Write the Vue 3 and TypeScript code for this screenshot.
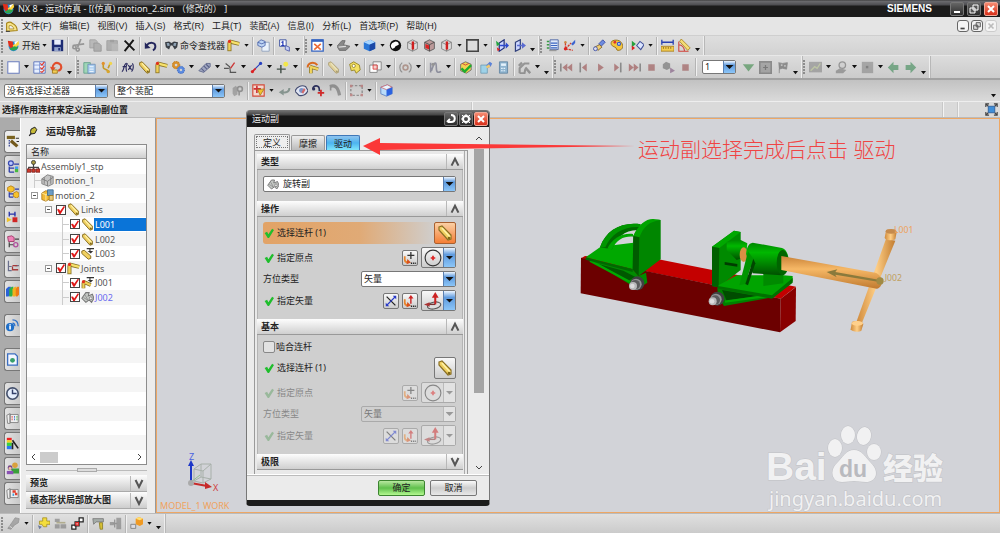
<script setup lang="ts">
import { ref } from 'vue'

type Item = { k: 'icon' | 'caret' | 'sep' | 'more' | 'text' | 'combo'; n?: string; t?: string; off?: boolean }
type Group = { items: Item[] }

const ic = (spec: string): Item[] =>
  spec.split(' ').map((s): Item => {
    if (s === 'v') return { k: 'caret' }
    if (s === '|') return { k: 'sep' }
    if (s === '_') return { k: 'more' }
    if (s === '#') return { k: 'combo' }
    if (s.startsWith('"')) return { k: 'text', t: s.slice(1) }
    if (s.startsWith('-')) return { k: 'icon', n: s.slice(1), off: true }
    return { k: 'icon', n: s }
  })

const menus = ['文件(F)', '编辑(E)', '视图(V)', '插入(S)', '格式(R)', '工具(T)', '装配(A)', '信息(I)', '分析(L)', '首选项(P)', '帮助(H)']

const bar1: Group[] = [
  { items: ic('nx "开始 v save | -cut -copy -paste delete | undo | find "命令查找器 joint v | cubedoc | infodoc _') },
  { items: ic('fit v shade v cube v contrast redbox1 redbox2 redbox1 v square v | csys1 csys2 _') },
  { items: ic('layers axes v | hand palette | playcube v | ruler protractor _') },
]
const bar2: Group[] = [
  { items: ic('page v checklist rewind _') },
  { items: ic('calc branch | fx pencil joint gears v spring v contact v linkline v point v | driver | -pencil | tag | overlap v | -rings v | -curve v | solve | export calc2 | -arm v _') },
  { items: ic('-first -prev -play -next -last -stop -camera -stop | # -down -plusbox -flag _') },
  { items: ic('-chart v -probe v -dotbox v -left -right _') },
]
const bar3: Item[] = ic('-rings2 | snap v -back eye pathred -pathgray | -marquee v | cubered')
const bottom: Item[] = ic('-wrench v | yellowplus -chips redlink | crane -tree | ycube v _')

const filter = ref('没有选择过滤器')
const scope = ref('整个装配')
const step = ref('1')
const kind = ref('旋转副')
const orient = ref('矢量')

const resTabs = [
  { n: 'nav1', on: true }, { n: 'nav2' }, { n: 'nav3' }, { n: 'nav4' }, { n: 'nav5' }, { n: 'nav6' }, { n: 'books' },
  { n: 'web', gap: true }, { n: 'html', gap: true }, { n: 'clock', gap: true }, { n: 'roll' }, { n: 'rainbow' }, { n: 'people' }, { n: 'roll2' },
]

type Row = { t: string; i: string; lv: string; exp?: boolean; chk?: boolean; line?: boolean; sel?: boolean; blue?: boolean }
const rows: Row[] = [
  { t: 'Assembly1_stp', i: 'asm', lv: 'l0' },
  { t: 'motion_1', i: 'motiongray', lv: 'l1', line: true },
  { t: 'motion_2', i: 'motion', lv: 'l1', exp: true },
  { t: 'Links', i: 'pencil', lv: 'l2', exp: true, chk: true },
  { t: 'L001', i: 'pencil', lv: 'l3', line: true, chk: true, sel: true },
  { t: 'L002', i: 'pencil', lv: 'l3', line: true, chk: true },
  { t: 'L003', i: 'pencilg', lv: 'l3', line: true, chk: true },
  { t: 'Joints', i: 'joint', lv: 'l2', exp: true, chk: true },
  { t: 'J001', i: 'jointg', lv: 'l3', line: true, chk: true },
  { t: 'J002', i: 'rev', lv: 'l3', line: true, chk: true, blue: true },
]
const blanks = 10
const tabs = ['定义', '摩擦', '驱动']
</script>

<template>
  <svg class="sprite" aria-hidden="true">
    <symbol id="nx" viewBox="0 0 16 16"><circle cx="8" cy="9" r="6" fill="#2a8ad0" /><path d="M1 2l6 1 1 6-3 3-3-4z" fill="#e0301c" /><path d="M7 8l7-6 1 4-6 7z" fill="#ffd640" /><path d="M3 12c3 3 8 3 11-2l-5-1z" fill="#2ea34a" /><path d="M9 4l5-2-4 5z" fill="#fff" /></symbol>
    <symbol id="save" viewBox="0 0 16 16"><path d="M1 1h14v14H1z" fill="#1d2c74" /><path d="M4 1h8v6H4z" fill="#e8eefc" /><path d="M4 10h8v5H4z" fill="#93a4cc" /><path d="M9 11h2v3H9z" fill="#1d2c74" /></symbol>
    <symbol id="cut" viewBox="0 0 16 16"><path d="M11 0L7 10M1 8l14-2" stroke="#555" stroke-width="2" /><circle cx="3" cy="10" r="2" fill="none" stroke="#555" stroke-width="2" /><circle cx="7" cy="13" r="2" fill="none" stroke="#555" stroke-width="2" /></symbol>
    <symbol id="copy" viewBox="0 0 16 16"><path d="M1 1h7l2 2v8H1z" fill="#999" stroke="#666" /><path d="M6 5h6l3 3v7H6z" fill="#888" stroke="#555" /></symbol>
    <symbol id="paste" viewBox="0 0 16 16"><path d="M1 2h13v12H1z" fill="#888" stroke="#666" /><path d="M5 1h5v3H5z" fill="#666" /><path d="M7 6h8v9H7z" fill="#999" /></symbol>
    <symbol id="delete" viewBox="0 0 16 16"><path d="M2 2l12 12M13 1L2 15" stroke="#161616" stroke-width="2.4" /></symbol>
    <symbol id="undo" viewBox="0 0 16 16"><path d="M3 8c4-5 11-4 11 1 0 2-1 4-3 5" fill="none" stroke="#23265c" stroke-width="2.4" /><path d="M1 4v8l7-1z" fill="#23265c" /></symbol>
    <symbol id="find" viewBox="0 0 16 16"><path d="M0 4l5-1 3 2 3-2 5 1-1 6-3 3-3-5H7l-2 5-4-3z" fill="#3b4047" /><path d="M2 5l3 0 1 3-3 1zM11 5l3 0-1 4-3-1z" fill="#8fa2b4" /></symbol>
    <symbol id="joint" viewBox="0 0 16 16"><path d="M3 3l12 3" stroke="#8a7424" stroke-width="5" /><path d="M3 3l12 3" stroke="#f7e26b" stroke-width="3" /><path d="M3 4v11" stroke="#8a7424" stroke-width="5" /><path d="M3 3v11" stroke="#efcf58" stroke-width="3" /><circle cx="3" cy="3" r="2" fill="#e0301c" /></symbol>
    <symbol id="cubedoc" viewBox="0 0 16 16"><path d="M6 4h9v11H6z" fill="#eaf2fb" stroke="#8a9bb8" /><path d="M1 4l4-3 5 2v5l-4 2-5-2z" fill="#bed5f4" stroke="#4660a8" /><path d="M1 4l5 2 4-2" fill="none" stroke="#4660a8" /></symbol>
    <symbol id="infodoc" viewBox="0 0 16 16"><path d="M2 1h8v8H2z" fill="#fff" stroke="#253d96" /><path d="M6 2v6M4 4h2M4 8h4" stroke="#2438b8" stroke-width="1.5" /><path d="M9 8l5 2v5l-5-2z" fill="#c6cff2" stroke="#4a56a8" /></symbol>
    <symbol id="fit" viewBox="0 0 16 16"><path d="M1 1h14v14H1z" fill="#fff" stroke="#3463c0" stroke-width="1.6" /><path d="M1 2h14" stroke="#3463c0" stroke-width="3" /><path d="M4 6l8 7M12 6l-8 7" stroke="#ec6a35" stroke-width="2" /></symbol>
    <symbol id="shade" viewBox="0 0 16 16"><path d="M0 9l6-7 4 0-2 5 8 2-5 5-8 0z" fill="#888" stroke="#666" /><path d="M2 10l9-1" stroke="#ddd" stroke-width="1.5" /></symbol>
    <symbol id="cube" viewBox="0 0 16 16"><path d="M1 4l8-3 6 3v8l-7 3-7-3z" fill="#2b78d8" /><path d="M1 4l8-3 6 3-7 3z" fill="#a9d6ff" /><path d="M8 7l7-3v8l-7 3z" fill="#1b48a6" /></symbol>
    <symbol id="cubered" viewBox="0 0 16 16"><path d="M1 4l8-3 6 3v8l-7 3-7-3z" fill="#b9dcfa" stroke="#5a7fc0" /><path d="M1 4l8-3 6 3-7 3z" fill="#e8f6ff" stroke="#d06a70" /><path d="M8 7l7-3v8l-7 3z" fill="#2b62e0" /></symbol>
    <symbol id="contrast" viewBox="0 0 16 16"><circle cx="8" cy="8" r="7" fill="#111" /><path d="M8 3a4 4 0 0 1 4 4L8 9a4 4 0 0 1-4 3 5 5 0 0 1 0-7z" fill="#fff" /></symbol>
    <symbol id="redbox1" viewBox="0 0 16 16"><path d="M2 4l6-3 6 3v8l-6 3-6-3z" fill="#ddd" stroke="#777" /><path d="M2 4l6 3 6-3M8 7v8" stroke="#777" fill="none" /><path d="M7 3h3v10H7z" fill="#cf2020" /></symbol>
    <symbol id="redbox2" viewBox="0 0 16 16"><path d="M2 4l6-3 6 3v8l-6 3-6-3z" fill="#b99" stroke="#555" /><path d="M3 6l5 2v5l-5-2z" fill="#d22" /><path d="M2 4l6 3 6-3M8 7v8" stroke="#444" fill="none" /></symbol>
    <symbol id="square" viewBox="0 0 16 16"><path d="M1 1h14v14H1z" fill="#dcdcdc" stroke="#444" stroke-width="2" /></symbol>
    <symbol id="csys1" viewBox="0 0 16 16"><path d="M4 5l6-4v10l-6 4z" fill="#cdd7ff" stroke="#20307c" stroke-width="1.5" /><path d="M5 7h7V4l4 4-4 4V9H5z" fill="#2c49d0" /><path d="M0 2l5 4-4 3z" fill="#24a440" /><path d="M1 10l4 3-3 2z" fill="#d22" /></symbol>
    <symbol id="csys2" viewBox="0 0 16 16"><path d="M3 4l6-3v11l-6 3z" fill="#cdd7ff" stroke="#30407c" stroke-width="1.5" /><path d="M5 7h6V4l5 4-5 4V9H5z" fill="#5a6bd0" /></symbol>
    <symbol id="layers" viewBox="0 0 16 16"><path d="M5 1h10v12H5z" fill="#dfe9f8" stroke="#3c589c" /><path d="M1 3h3M1 7h3M1 11h3" stroke="#3a9a46" stroke-width="2" /><path d="M6 5h8M6 8h8M6 11h8" stroke="#3b64c0" stroke-width="1.5" /><path d="M4 14h9" stroke="#999" stroke-width="2" /></symbol>
    <symbol id="axes" viewBox="0 0 16 16"><path d="M3 12V4M3 12l9 2M3 12l7-7" stroke="#d23a2a" stroke-width="1.6" stroke-dasharray="3 1" /><path d="M10 6l5-5v4l-3 3z" fill="#3b64d0" /><circle cx="3" cy="12" r="2" fill="#d22" /><circle cx="3" cy="4" r="1.5" fill="#c84" /></symbol>
    <symbol id="hand" viewBox="0 0 16 16"><path d="M7 6l5-5 3 3-5 5z" fill="#6d8be0" stroke="#3346a0" /><path d="M2 10l6-3 3 3-5 4z" fill="#f1cf72" stroke="#7a5a20" /><circle cx="3" cy="12" r="2.4" fill="#dde" stroke="#3346a0" /></symbol>
    <symbol id="palette" viewBox="0 0 16 16"><path d="M2 3c4-3 11-2 13 3s-1 8-5 8c-3 0-1-3-4-4S0 7 2 3z" fill="#f4c53c" stroke="#8a6414" /><circle cx="6" cy="4" r="1.7" fill="#d33" /><circle cx="11" cy="6" r="2.6" fill="#2c5bd0" /><circle cx="11" cy="6" r="1" fill="#fff" /></symbol>
    <symbol id="playcube" viewBox="0 0 16 16"><path d="M1 2l5 4-5 4z" fill="#26a13e" /><path d="M1 8l4 3-4 3z" fill="#d22" /><path d="M7 8l4-5 5 4-4 6z" fill="#dce6ff" stroke="#3f4f98" stroke-width="1.3" /></symbol>
    <symbol id="ruler" viewBox="0 0 16 16"><path d="M0 9h16v6H0z" fill="#f3cd50" stroke="#a57a18" /><path d="M1 4h14M1 1v6M15 1v6" stroke="#2840b0" stroke-width="1.6" /><path d="M3 10v2M6 10v2M9 10v2M12 10v2" stroke="#7a5a10" /></symbol>
    <symbol id="protractor" viewBox="0 0 16 16"><path d="M1 3v12h12M1 7c4 0 7 4 7 8" fill="none" stroke="#d04038" stroke-width="1.3" /><path d="M4 0l11 11-3 3L2 3z" fill="#f4db74" stroke="#a5821e" /></symbol>
    <symbol id="page" viewBox="0 0 16 16"><path d="M1 1h14v14H1z" fill="#fff" stroke="#6c7fc0" stroke-width="1.3" /></symbol>
    <symbol id="checklist" viewBox="0 0 16 16"><path d="M1 1h14v14H1z" fill="#e6efff" stroke="#4d67b4" /><path d="M8 1v14M1 5h14M1 10h14" stroke="#7c95d4" /><path d="M9 3l2 2 3-4M9 8l2 2 3-4M9 13l2 1 3-3" stroke="#e03a2a" fill="none" stroke-width="1.4" /></symbol>
    <symbol id="rewind" viewBox="0 0 16 16"><path d="M3 9c0-5 4-8 8-6s4 8-1 9" fill="none" stroke="#e14e2c" stroke-width="2.6" /><path d="M0 7l7 1-4 5z" fill="#e14e2c" /><path d="M3 11h6v4H3z" fill="#f3cc56" stroke="#9a7414" /></symbol>
    <symbol id="calc" viewBox="0 0 16 16"><path d="M1 2h8v13H1z" fill="#9fd6b6" stroke="#5f9c88" /><path d="M6 4h9v11H6z" fill="#a9cdf0" stroke="#6c8cb4" /><path d="M8 7h5M8 10h5M8 13h5" stroke="#fff" /></symbol>
    <symbol id="branch" viewBox="0 0 16 16"><path d="M4 3v5c0 3 7 2 7 6M12 4l-2 5" fill="none" stroke="#c59a28" stroke-width="2" /><circle cx="4" cy="3" r="2" fill="#e2912c" /><circle cx="13" cy="3" r="2" fill="#f1d54c" /><circle cx="10" cy="13" r="2" fill="#d8a52c" /></symbol>
    <symbol id="fx" viewBox="0 0 16 16"><path d="M1 13c3 0 2-10 6-10M2 7h5M8 3c-2 3-2 7-1 10M14 3c2 3 1 8-1 10M9 5l4 6M13 5l-4 6" fill="none" stroke="#2c2c60" stroke-width="1.4" /></symbol>
    <symbol id="pencil" viewBox="0 0 16 16"><path d="M2 2l3-1 9 9 0 4-3 1L2 5z" fill="#f0d060" stroke="#8a7024" stroke-width="1.2" /><path d="M5 3l8 9" stroke="#fff2a8" stroke-width="1.6" /><circle cx="12" cy="13" r="1.3" fill="#806818" /></symbol>
    <symbol id="gears" viewBox="0 0 16 16"><circle cx="5" cy="5" r="3.2" fill="none" stroke="#d8902c" stroke-width="3" /><circle cx="5" cy="5" r="4.6" fill="none" stroke="#b8741c" stroke-dasharray="1.5 1.5" /><circle cx="11" cy="11" r="3" fill="none" stroke="#5a8ae0" stroke-width="3" /><circle cx="11" cy="11" r="4.4" fill="none" stroke="#3a60b0" stroke-dasharray="1.5 1.5" /></symbol>
    <symbol id="spring" viewBox="0 0 16 16"><path d="M1 12l9-9 5 0 0 4-8 7z" fill="#a0a6c0" stroke="#5a6288" /><path d="M4 9l4 4M7 6l4 4M10 4l4 4" stroke="#5a6288" stroke-width="1.4" /></symbol>
    <symbol id="contact" viewBox="0 0 16 16"><path d="M7 14h8M2 3l5 4 1 7M0 9h6" stroke="#555" stroke-width="1.4" fill="none" /><path d="M8 9l5-7" stroke="#c33" stroke-width="1.6" /></symbol>
    <symbol id="linkline" viewBox="0 0 16 16"><path d="M2 14L13 3" stroke="#2740c0" stroke-width="1.5" /><circle cx="3" cy="13" r="2" fill="#d22" /><circle cx="13" cy="3" r="2" fill="#2740c0" /><path d="M4 12l3-3" stroke="#d22" stroke-width="2" /></symbol>
    <symbol id="point" viewBox="0 0 16 16"><path d="M6 5v10M1 10h11" stroke="#45524a" stroke-width="1.8" /><circle cx="12" cy="4" r="3" fill="#f2e74a" /></symbol>
    <symbol id="driver" viewBox="0 0 16 16"><path d="M2 8c0-6 8-8 12-3" fill="none" stroke="#d9691f" stroke-width="2.4" /><path d="M5 7l10 3M6 7v8" stroke="#8a7424" stroke-width="4.4" /><path d="M5 7l10 3M6 7v8" stroke="#f2d55c" stroke-width="2.6" /></symbol>
    <symbol id="tag" viewBox="0 0 16 16"><path d="M2 4l5-3 7 4 1 6-5 4-2-4-4 1z" fill="#f2df62" stroke="#8d7a1c" /><circle cx="7" cy="6" r="2" fill="#fff" stroke="#8d7a1c" /></symbol>
    <symbol id="overlap" viewBox="0 0 16 16"><path d="M5 1h10v10H5z" fill="#f4f4f4" stroke="#777" /><path d="M1 5h9v9H1z" fill="#fff" stroke="#777" /><path d="M5 5h5v5H5z" fill="#f3d0cc" stroke="#d33" /></symbol>
    <symbol id="rings" viewBox="0 0 16 16"><path d="M4 2c-4 3-4 9 0 12M12 2c4 3 4 9 0 12" fill="none" stroke="#555" stroke-width="1.5" /><circle cx="8" cy="8" r="3" fill="none" stroke="#8a5a4a" stroke-width="2" /></symbol>
    <symbol id="rings2" viewBox="0 0 16 16"><path d="M2 5l4-3 2 3v8l-4 2-2-3z" fill="#777" /><circle cx="11" cy="6" r="3" fill="none" stroke="#555" stroke-width="2" /><path d="M10 9v5" stroke="#555" stroke-width="2" /></symbol>
    <symbol id="curve" viewBox="0 0 16 16"><path d="M2 2v12M3 12c4-12 6-12 6-4s3 6 6 5" fill="none" stroke="#4c4f6a" stroke-width="2" /><circle cx="5" cy="4" r="2" fill="#555" /></symbol>
    <symbol id="solve" viewBox="0 0 16 16"><path d="M2 4l6-3 7 3v7l-6 4-7-3z" fill="#f2d250" stroke="#666" /><path d="M4 3l4 2 4-2" stroke="#c33" fill="none" /><path d="M3 9l4 4 8-8" stroke="#1fae2c" stroke-width="3" fill="none" /></symbol>
    <symbol id="export" viewBox="0 0 16 16"><path d="M1 5h8v10H1z" fill="#9ed2e8" stroke="#6f9cb4" /><path d="M8 5l4-4 3 2-2 4-4 2z" fill="#5b82d8" /><path d="M7 7l4-3 2 3-4 2z" fill="#f0c86c" /></symbol>
    <symbol id="calc2" viewBox="0 0 16 16"><path d="M3 1h10v14H3z" fill="#8fb4cf" stroke="#5f82a0" /><path d="M5 3h6v3H5z" fill="#e4f2fc" /><path d="M5 9h6M5 12h6" stroke="#e4f2fc" stroke-dasharray="2 1" stroke-width="1.5" /></symbol>
    <symbol id="arm" viewBox="0 0 16 16"><path d="M2 15V9l6-6 6 0M2 15h6l1-5" fill="none" stroke="#555" stroke-width="2.6" /><path d="M9 8l6 7M1 6l4-4" stroke="#555" stroke-width="3" /></symbol>
    <symbol id="first" viewBox="0 0 16 16"><path d="M1 3v10" stroke="#444" stroke-width="2" /><path d="M9 3v10L3 8zM15 3v10L9 8z" fill="#8c2f2f" /></symbol>
    <symbol id="prev" viewBox="0 0 16 16"><path d="M4 2v12" stroke="#444" stroke-width="2" /><path d="M12 3v10L6 8z" fill="#8c2f2f" /></symbol>
    <symbol id="play" viewBox="0 0 16 16"><path d="M5 3v10l7-5z" fill="#8c2f2f" /></symbol>
    <symbol id="next" viewBox="0 0 16 16"><path d="M12 2v12" stroke="#444" stroke-width="2" /><path d="M4 3v10l6-5z" fill="#8c2f2f" /></symbol>
    <symbol id="last" viewBox="0 0 16 16"><path d="M15 3v10" stroke="#444" stroke-width="2" /><path d="M1 3v10l6-5zM7 3v10l6-5z" fill="#8c2f2f" /></symbol>
    <symbol id="stop" viewBox="0 0 16 16"><path d="M4 4h8v8H4z" fill="#8c3636" /></symbol>
    <symbol id="camera" viewBox="0 0 16 16"><path d="M1 4l4-3 5 2v6l-4 2-5-2z" fill="#555" /><path d="M10 8v7l6-3z" fill="#6b3a6b" /></symbol>
    <symbol id="down" viewBox="0 0 16 16"><path d="M1 4h14L8 13z" fill="#1e7a2c" /></symbol>
    <symbol id="plusbox" viewBox="0 0 16 16"><path d="M1 1h14v14H1z" fill="#777" stroke="#444" stroke-width="2" /><path d="M8 5v6M5 8h6" stroke="#222" stroke-width="1.5" /></symbol>
    <symbol id="flag" viewBox="0 0 16 16"><path d="M3 2l5 1 6-1-1 8-5-1-4 1v5" fill="#444" stroke="#444" /><path d="M6 4h2v2H6zM10 5h2v2h-2z" fill="#aaa" /></symbol>
    <symbol id="chart" viewBox="0 0 16 16"><path d="M0 1h16v13H0z" fill="#777" /><path d="M2 12l5-5 3 2 4-6" stroke="#a8b878" stroke-width="1.6" fill="none" /></symbol>
    <symbol id="probe" viewBox="0 0 16 16"><circle cx="9" cy="5" r="4" fill="#ccc" stroke="#555" stroke-width="1.6" /><path d="M6 9l-5 3v3h9l4-4z" fill="#666" /></symbol>
    <symbol id="dotbox" viewBox="0 0 16 16"><path d="M1 1h14v14H1z" fill="#777" /><path d="M6 6h3v3H6z" fill="#333" /></symbol>
    <symbol id="left" viewBox="0 0 16 16"><path d="M8 1v4h6v6H8v4L1 8z" fill="#1d7a3c" /></symbol>
    <symbol id="right" viewBox="0 0 16 16"><path d="M8 1v4H2v6h6v4l7-7z" fill="#1d7a3c" /></symbol>
    <symbol id="snap" viewBox="0 0 16 16"><path d="M1 1h14v14H1z" fill="#f3d8d0" stroke="#d44b3a" stroke-width="1.4" /><path d="M6 2v9M2 6h9" stroke="#c33" stroke-width="2" /><path d="M7 7l8-1-5 8z" fill="#f3c12c" stroke="#a57a20" /></symbol>
    <symbol id="back" viewBox="0 0 16 16"><path d="M14 5c0 5-4 6-9 5" fill="none" stroke="#3e5a50" stroke-width="2.4" /><path d="M7 6v8l-6-4z" fill="#3e5a50" /></symbol>
    <symbol id="eye" viewBox="0 0 16 16"><path d="M0 9c2-6 8-8 13-6l3 5c-2 5-6 7-11 6z" fill="#dfe4f2" stroke="#444c70" stroke-width="1.4" /><circle cx="8" cy="8" r="3" fill="#7c94c8" /><path d="M8 10l3-5 2 2-3 5z" fill="#d06a6a" /></symbol>
    <symbol id="pathred" viewBox="0 0 16 16"><path d="M1 6c1-5 8-5 8 1v2" fill="none" stroke="#2d315c" stroke-width="2" /><path d="M11 7v8M7 11h8" stroke="#d02a2a" stroke-width="2.2" /><circle cx="2" cy="6" r="2" fill="#2d315c" /></symbol>
    <symbol id="pathgray" viewBox="0 0 16 16"><path d="M1 3c6-2 10 0 12 11" fill="none" stroke="#555" stroke-width="4" /><path d="M2 3v5" stroke="#555" stroke-width="2" /></symbol>
    <symbol id="marquee" viewBox="0 0 16 16"><path d="M1 2h14v12H1z" fill="none" stroke="#555" stroke-width="1.8" stroke-dasharray="3 2" /><path d="M0 1h3v3H0zM13 1h3v3h-3zM0 12h3v3H0zM13 12h3v3h-3z" fill="#a44" /></symbol>
    <symbol id="wrench" viewBox="0 0 16 16"><path d="M1 14l5-7 4-6 5 1-1 5-5 3-4 5z" fill="#777" stroke="#555" /><path d="M3 11l4 3" stroke="#eee" /></symbol>
    <symbol id="yellowplus" viewBox="0 0 16 16"><path d="M7 1h5v4h4v4h-4v3H8L6 9H3V5h4z" fill="#f4de3c" stroke="#a58f24" /><path d="M1 10l5 2-3 3z" fill="#6b7a9c" /></symbol>
    <symbol id="chips" viewBox="0 0 16 16"><path d="M1 2h6v4H1zM1 9h6v5H1zM8 9h7v5H8z" fill="#666" /><path d="M3 7h11" stroke="#8d8448" stroke-width="2" /></symbol>
    <symbol id="redlink" viewBox="0 0 16 16"><path d="M10 1h5v5h-5zM5 6h5v5H5zM1 10h5v5H1z" fill="#fff" stroke="#222" stroke-width="1.5" /><path d="M6 7h3v3H6z" fill="#fff" stroke="#d22" stroke-width="1.6" /></symbol>
    <symbol id="crane" viewBox="0 0 16 16"><path d="M1 2h13v4H5L2 9z" fill="#a4aca8" stroke="#777" /><path d="M9 7h4v8h-3z" fill="#d6c034" stroke="#8a7c24" /></symbol>
    <symbol id="tree" viewBox="0 0 16 16"><path d="M9 1h6v14H9zM1 6h5v4H1z" fill="#666" /><path d="M5 8h5M7 3v10" stroke="#555" stroke-width="1.6" /></symbol>
    <symbol id="ycube" viewBox="0 0 16 16"><path d="M7 2l4-2 5 2v7l-4 2-5-2z" fill="#f09a24" /><path d="M7 2l4-2 5 2-4 2z" fill="#ffdf72" /><path d="M1 9h6v5H1z" fill="#dcdce4" stroke="#777" /></symbol>

    <symbol id="nav1" viewBox="0 0 16 16"><path d="M1 3h10" stroke="#7a6320" stroke-width="4" /><path d="M4 6v9" stroke="#2a3a8c" stroke-width="1.4" stroke-dasharray="2 1" /><path d="M6 7l8 7" stroke="#73591c" stroke-width="4" /><path d="M12 4h4M13 8h3" stroke="#333" stroke-width="1.4" /></symbol>
    <symbol id="nav2" viewBox="0 0 16 16"><circle cx="6" cy="4" r="3" fill="#b9c8ff" stroke="#3849b0" stroke-width="1.5" /><path d="M4 8v7M4 10h6M4 15h6M10 5h6" stroke="#2c3da8" stroke-width="1.6" fill="none" /><path d="M11 8h4v3h-4z" fill="#3b9cf0" /><path d="M11 11h4v4h-4z" fill="#46b93e" /></symbol>
    <symbol id="nav3" viewBox="0 0 16 16"><path d="M2 3l4-2 4 2v4L6 9 2 7zM9 10l4-2 3 2v4l-3 2-4-2z" fill="#f6c22c" stroke="#b47a10" /><path d="M4 9v6M4 11h5M4 15h5M11 5h5" stroke="#2c3da8" stroke-width="1.5" /></symbol>
    <symbol id="nav4" viewBox="0 0 16 16"><path d="M4 2v6M11 2v6M4 5h8" stroke="#2430a8" stroke-width="1.6" /><path d="M1 9l6 3-6 3z" fill="#f1c326" /><path d="M8 9h6v6H8z" fill="#d02424" /></symbol>
    <symbol id="nav5" viewBox="0 0 16 16"><path d="M2 2l5-1 3 2v5H3z" fill="#ef82b8" stroke="#96305e" /><path d="M4 9v6M4 12h6M11 5h5" stroke="#444" stroke-width="1.5" /><circle cx="12" cy="12" r="2.6" fill="none" stroke="#b0509c" stroke-width="1.6" /></symbol>
    <symbol id="nav6" viewBox="0 0 16 16"><path d="M3 1v12h4M3 8h4M11 7h5" stroke="#6a6f8c" stroke-width="1.5" fill="none" /><path d="M8 7h6M8 12h7M8 8v5" stroke="#a53a3a" stroke-width="1.6" /></symbol>
    <symbol id="books" viewBox="0 0 16 16"><path d="M0 5l3-3h3v10l-3 2H0z" fill="#2a63d8" /><path d="M4 5l3-3h2v10l-2 2H4z" fill="#2fb047" /><path d="M8 5l3-3h2v10l-2 2H8z" fill="#f3b01e" /><path d="M12 5l2-3h2v10l-2 2h-2z" fill="#ef7a16" /></symbol>
    <symbol id="web" viewBox="0 0 16 16"><circle cx="5" cy="10" r="5" fill="#1f6fc8" /><path d="M5 8v5M5 6v1" stroke="#fff" stroke-width="2" /><path d="M8 5c2 0 3 2 3 4M8 1c5 0 7 4 7 8" fill="none" stroke="#2c6fc8" stroke-width="1.5" /></symbol>
    <symbol id="html" viewBox="0 0 16 16"><path d="M2 1h9l3 3v11H2z" fill="#f2f6ff" stroke="#3b6ec0" stroke-width="1.6" /><circle cx="8" cy="9" r="3" fill="#38a06a" /></symbol>
    <symbol id="clock" viewBox="0 0 16 16"><circle cx="8" cy="8" r="7" fill="#e6eefc" stroke="#44506c" stroke-width="2" /><path d="M8 3v5h5" fill="none" stroke="#33406a" stroke-width="1.8" /></symbol>
    <symbol id="roll" viewBox="0 0 16 16"><path d="M1 4l4-2v12H2zM5 3h10v10H5z" fill="#eee" stroke="#777" /><path d="M7 6h1M7 9h1" stroke="#d33" stroke-width="2" /><path d="M10 6h1M10 9h1" stroke="#36c" stroke-width="2" /><path d="M13 6h1M13 9h1" stroke="#3a3" stroke-width="2" /></symbol>
    <symbol id="roll2" viewBox="0 0 16 16"><path d="M1 4l4-2v12H2zM5 3h10v10H5z" fill="#eee" stroke="#777" /><path d="M8 4h4v3H8zM11 7h3v3h-3z" fill="#e04030" /><path d="M8 8h2v3H8z" fill="#46a0d8" /></symbol>
    <symbol id="rainbow" viewBox="0 0 16 16"><path d="M1 1h6v3H1z" fill="#e22" /><path d="M1 4h6v3H1z" fill="#f7d21c" /><path d="M1 7h6v4H1z" fill="#39d23c" /><path d="M1 11h6v4H1z" fill="#2a7af0" /><path d="M8 4l7 10M8 7v8" stroke="#222" stroke-width="2" /></symbol>
    <symbol id="people" viewBox="0 0 16 16"><circle cx="11" cy="4" r="3.4" fill="#d9a03c" /><path d="M6 8h10v6H8z" fill="#3aa03a" /><circle cx="5" cy="7" r="3" fill="#7a4a8c" /><circle cx="5" cy="8" r="1.8" fill="#f1c8a0" /><path d="M1 11h8v4H1z" fill="#8a50b4" /></symbol>

    <symbol id="asm" viewBox="0 0 16 16"><path d="M8 4v5M2 13V9h12v4M8 9v4" stroke="#444" fill="none" stroke-width="1.4" /><circle cx="8" cy="3" r="2.5" fill="#a89a44" stroke="#333" /><path d="M0 11h5v4H0zM6 11h4v4H6zM11 11h5v4h-5z" fill="#d33a2a" stroke="#722" /></symbol>
    <symbol id="motiongray" viewBox="0 0 16 16"><path d="M1 6l7-5 7 2v9l-6 3-8-3z" fill="#c4c4c4" stroke="#777" /><path d="M1 6l7 3 7-5M8 9v6M4 4v8M12 3v9" stroke="#777" fill="none" /></symbol>
    <symbol id="motion" viewBox="0 0 16 16"><path d="M1 5l5-3 5 2v8l-5 3-5-2z" fill="#f3ba36" stroke="#a9761a" /><path d="M1 5l5 2 5-3M6 7v8" stroke="#fff0b0" fill="none" /><path d="M8 1h7v7H8z" fill="#6c9cc4" stroke="#3b688c" /><path d="M10 8h5v6h-5z" fill="#e9c878" stroke="#9a7418" /></symbol>
    <symbol id="pencilg" viewBox="0 0 16 16"><path d="M1 5l3-1 8 7 0 3-3 1L1 8z" fill="#f0d060" stroke="#8a7024" stroke-width="1.2" /><path d="M7 2h9M11 2v3" stroke="#333" stroke-width="1.4" /><path d="M8 5h7l-3 3z" fill="#333" /></symbol>
    <symbol id="jointg" viewBox="0 0 16 16"><path d="M3 7l9 4M3 8v7" stroke="#8a7424" stroke-width="4.6" /><path d="M3 7l9 4M3 8v7" stroke="#efcf58" stroke-width="2.6" /><circle cx="3" cy="7" r="2" fill="#e0301c" /><path d="M7 2h9M11 2v3" stroke="#333" stroke-width="1.4" /><path d="M8 5h7l-3 3z" fill="#333" /></symbol>
    <symbol id="rev" viewBox="0 0 16 16"><path d="M1 9l5-7 4 0-1 4 5-2 2 5-3 5-3-3-4 3z" fill="#c4c8c4" stroke="#777" stroke-width="1.3" /><path d="M5 5l4 7M3 8l5 3" stroke="#888" /><circle cx="12" cy="9" r="1.8" fill="#eee" stroke="#777" /></symbol>
    <symbol id="pin" viewBox="0 0 16 16"><path d="M5 4l6-3 3 4-3 6-6 1-1-4z" fill="#c7ba38" stroke="#222" stroke-width="1.6" /><path d="M5 11l-3 4" stroke="#222" stroke-width="2" /></symbol>
    <symbol id="corner" viewBox="0 0 16 16"><path d="M2 14V4c3-2 5-2 7 0 4 2 6 6 6 9z" fill="#f7e487" stroke="#a8861c" stroke-width="1.4" /><path d="M5 11V7c3-1 5 1 6 4z" fill="#eee" stroke="#a8861c" /><path d="M1 14h5" stroke="#444" stroke-width="1.4" /></symbol>
    <symbol id="full" viewBox="0 0 16 16"><path d="M4 4h8v8H4z" fill="#3f8ed8" stroke="#275a98" /><path d="M1 5V1h4M11 1h4v4M15 11v4h-4M5 15H1v-4M1 1l3 3M15 1l-3 3M1 15l3-3M15 15l-3-3" fill="none" stroke="#444" stroke-width="1.4" /></symbol>
    <symbol id="tick" viewBox="0 0 16 16"><path d="M1 8l4-2 2 4 6-9 3 2-8 13H6z" fill="#1fbe2c" /></symbol>
    <symbol id="ptctor" viewBox="0 0 16 16"><path d="M9 1v8M5 5h8" stroke="#333" stroke-width="1.5" /><path d="M2 6v4c0 3 2 3 4 3" fill="none" stroke="#e8842c" stroke-width="2" /><path d="M5 9l4 4-5 2z" fill="#d8501c" /><path d="M9 14h6" stroke="#222" stroke-width="1.6" stroke-dasharray="1.5 1" /></symbol>
    <symbol id="vecctor" viewBox="0 0 16 16"><path d="M9 4v7" stroke="#c22" stroke-width="1.6" /><path d="M6 5l3-4 3 4z" fill="#c22" /><path d="M2 6v4c0 3 2 3 4 3" fill="none" stroke="#e8842c" stroke-width="2" /><path d="M5 9l4 4-5 2z" fill="#d8501c" /><path d="M9 14h6" stroke="#222" stroke-width="1.6" stroke-dasharray="1.5 1" /></symbol>
    <symbol id="flip" viewBox="0 0 16 16"><path d="M3 3l10 10" stroke="#222" stroke-width="1.4" /><path d="M3 13L13 3" stroke="#2839c8" stroke-width="1.6" /><path d="M10 2h4v4zM2 10v4h4z" fill="#2839c8" /></symbol>
    <symbol id="center" viewBox="0 0 16 16"><circle cx="8" cy="8" r="7" fill="none" stroke="#333" stroke-width="1" /><path d="M8 6v4M6 8h4" stroke="#d22" stroke-width="1.5" /></symbol>
    <symbol id="vector" viewBox="0 0 16 16"><ellipse cx="9" cy="12" rx="6" ry="3" fill="#ddd" stroke="#555" transform="rotate(-12 9 12)" /><path d="M10 11V4" stroke="#c22" stroke-width="1.8" /><path d="M7 5l3-5 3 5z" fill="#c22" /><path d="M10 11H4" stroke="#733" stroke-width="1.2" /><path d="M5 9l-5 2 5 2z" fill="#a33" /></symbol>
    <symbol id="chevup" viewBox="0 0 16 16"><path d="M3 14L8 4l5 10" fill="none" stroke="#555" stroke-width="3" /></symbol>
    <symbol id="chevdn" viewBox="0 0 16 16"><path d="M3 3l5 10 5-10" fill="none" stroke="#555" stroke-width="3" /></symbol>
  </svg>

  <div class="app">
    <header class="title">
      <svg class="ic"><use href="#nx" /></svg>
      <span class="cap">NX 8 - 运动仿真 - [(仿真) motion_2.sim （修改的） ]</span>
      <b class="brand">SIEMENS</b>
      <div class="wins">
        <button class="win" aria-label="最小化"><svg viewBox="0 0 12 12"><path d="M3 9h6" stroke="#fff" stroke-width="2" /></svg></button>
        <button class="win" aria-label="还原"><svg viewBox="0 0 12 12"><path d="M5 2h5v5H5zM2 5h5v5H2z" fill="#555" stroke="#fff" /></svg></button>
        <button class="win red" aria-label="关闭"><svg viewBox="0 0 12 12"><path d="M3 3l6 6M9 3l-6 6" stroke="#fff" stroke-width="2" /></svg></button>
      </div>
    </header>

    <nav class="menu">
      <i class="grip"></i>
      <svg class="ic"><use href="#corner" /></svg>
      <button v-for="m in menus" :key="m" class="mi">{{ m.split('(')[0] }}<span>({{ m.split('(')[1] }}</span></button>
      <div class="wins doc">
        <button class="dw" aria-label="最小化文档"><svg viewBox="0 0 12 12"><path d="M3 9h5" stroke="#444" stroke-width="2" /></svg></button>
        <button class="dw" aria-label="还原文档"><svg viewBox="0 0 12 12"><path d="M5 2h5v5H5zM2 5h5v5H2z" fill="#ddd" stroke="#444" /></svg></button>
        <button class="dw dim" aria-label="关闭文档"><svg viewBox="0 0 12 12"><path d="M3 3l6 6M9 3l-6 6" stroke="#bbb" stroke-width="2" /></svg></button>
      </div>
    </nav>

    <div v-for="(bar, b) in [bar1, bar2]" :key="b" class="bar" :class="'bar' + (b + 1)">
      <div v-for="(g, gi) in bar" :key="gi" class="group">
        <i class="grip"></i>
        <template v-for="(it, i) in g.items" :key="i">
          <button v-if="it.k === 'icon'" class="tb" :class="{ off: it.off }" :aria-label="it.n"><svg class="ic"><use :href="'#' + it.n" /></svg></button>
          <i v-else-if="it.k === 'caret'" class="caret"></i>
          <i v-else-if="it.k === 'sep'" class="sep"></i>
          <i v-else-if="it.k === 'more'" class="caret more"></i>
          <span v-else-if="it.k === 'text'" class="tx">{{ it.t }}</span>
          <label v-else class="combo num"><select v-model="step" aria-label="步"><option>1</option></select><i class="drop"></i></label>
        </template>
      </div>
    </div>

    <div class="bar bar3">
      <label class="combo wide1"><select v-model="filter" aria-label="过滤器"><option>没有选择过滤器</option></select><i class="drop"></i></label>
      <label class="combo wide2"><select v-model="scope" aria-label="范围"><option>整个装配</option></select><i class="drop"></i></label>
      <template v-for="(it, i) in bar3" :key="i">
        <button v-if="it.k === 'icon'" class="tb" :class="{ off: it.off }" :aria-label="it.n"><svg class="ic"><use :href="'#' + it.n" /></svg></button>
        <i v-else :class="it.k"></i>
      </template>
      <i class="caret more far"></i>
    </div>

    <div class="prompt">
      <b>选择作用连杆来定义运动副位置</b>
      <i class="psep first"></i><i class="psep"></i><i class="psep last"></i>
      <button class="tb" aria-label="全屏"><svg class="ic"><use href="#full" /></svg></button>
    </div>

    <main class="main">
      <aside class="res">
        <button v-for="t in resTabs" :key="t.n" class="rt" :class="{ on: t.on, gap: t.gap }" :aria-label="t.n"><svg class="ic"><use :href="'#' + t.n" /></svg></button>
      </aside>

      <section class="side">
        <h2><svg class="ic pin"><use href="#pin" /></svg>运动导航器</h2>
        <div class="treebox">
          <div class="thead">名称</div>
          <ul class="tree">
            <li v-for="r in rows" :key="r.t" :class="r.lv">
              <i v-if="r.exp || r.line" class="slot" :class="{ line: r.line }"><button v-if="r.exp" class="exp" aria-label="折叠"></button></i>
              <input v-if="r.chk" type="checkbox" checked :aria-label="r.t" />
              <svg class="ic"><use :href="'#' + r.i" /></svg>
              <span :class="{ sel: r.sel, blue: r.blue }">{{ r.t }}</span>
            </li>
            <li v-for="n in blanks" :key="n"></li>
          </ul>
          <div class="hs"><svg viewBox="0 0 8 8"><path d="M5 1L2 4l3 3" /></svg><i></i><svg viewBox="0 0 8 8"><path d="M3 1l3 3-3 3" /></svg></div>
        </div>
        <div class="split"><i></i></div>
        <button class="acc">预览<svg class="ic chev"><use href="#chevdn" /></svg></button>
        <button class="acc">模态形状局部放大图<svg class="ic chev"><use href="#chevdn" /></svg></button>
      </section>

      <section class="view">
        <svg class="vise" viewBox="0 0 1080 420" aria-label="台虎钳模型">
          <defs>
            <linearGradient id="rod" x1="0" y1="0" x2="0" y2="1"><stop offset="0" stop-color="#c98238" /><stop offset=".4" stop-color="#f6b866" /><stop offset="1" stop-color="#c07a30" /></linearGradient>
            <linearGradient id="bar" x1="0" y1="0" x2="1" y2="0"><stop offset="0" stop-color="#d08a3c" /><stop offset=".5" stop-color="#ffcf86" /><stop offset="1" stop-color="#c27c30" /></linearGradient>
            <linearGradient id="cyl" x1="0" y1="0" x2="0" y2="1"><stop offset="0" stop-color="#008800" /><stop offset=".3" stop-color="#00b800" /><stop offset=".6" stop-color="#008c00" /><stop offset="1" stop-color="#004e00" /></linearGradient>
          </defs>
          <path d="M33 145L45 138 265 148 678 230 632 266z" fill="#c40000" />
          <path d="M33 143L632 266 630 367 32 250z" fill="#6c0000" />
          <path d="M632 266L678 231 677 333 630 367z" fill="#890000" />
          <path d="M47 143L188 178 205 198 228 188 232 218 208 234 178 222z" fill="#008c00" />
          <path d="M86 162L176 212 195 200 160 182z" fill="#005800" />
          <path d="M60 152L180 216" stroke="#00a800" stroke-width="7" />
          <path d="M47 142L92 110 190 98 190 178z" fill="#00a800" />
          <path d="M47 142L188 178v8L47 149z" fill="#006800" />
          <path d="M90 112C108 60 155 35 212 43L204 60C160 60 140 86 126 118z" fill="#006a00" />
          <path d="M90 112C108 60 155 35 212 43L208 51C160 48 122 72 106 112z" fill="#009600" />
          <path d="M126 118C140 88 162 78 190 80L189 72C156 68 126 86 112 116z" fill="#00a600" />
          <path d="M190 78C206 44 228 26 272 30L272 148 206 198 188 178z" fill="#008600" />
          <path d="M190 78C206 44 228 26 250 27L272 30C236 36 222 48 208 82z" fill="#00a400" />
          <path d="M190 78L208 82 206 198 188 178z" fill="#005c00" />
          <circle cx="202" cy="220" r="21" fill="#3f4042" /><circle cx="198" cy="223" r="17" fill="#8f9092" /><circle cx="196" cy="224" r="14" fill="#5a5b5d" /><circle cx="189" cy="228" r="12" fill="#b8b9bb" /><circle cx="187" cy="228" r="7" fill="#dcdcde" />
          <path d="M442 232L606 262 576 268 462 288 444 260z" fill="#008000" />
          <path d="M456 240L560 258 470 272z" fill="#004c00" /><path d="M465 275L590 258" stroke="#00a800" stroke-width="7" />
          <path d="M426 110L492 62 512 66 512 180 446 232 426 228z" fill="#008a00" />
          <path d="M426 110L492 62 512 66 448 114z" fill="#00a800" /><path d="M426 110L448 114 446 232 426 228z" fill="#006000" />
          <path d="M470 95L512 90 532 100 528 140 500 150 470 120z" fill="url(#cyl)" /><path d="M464 156l38 6v8l-38-6z" fill="#003c00" />
          <path d="M446 226L500 196 640 196 668 198 668 214 606 264 444 234z" fill="#00a400" />
          <path d="M668 204v14L606 266 444 236v-8L606 256z" fill="#007000" />
          <ellipse cx="521" cy="134" rx="12" ry="22" fill="#d98f44" />
          <path d="M580 190L640 164v56l-60 8z" fill="#008a00" />
          <path d="M528 132C530 112 536 100 548 98L636 114C664 122 662 190 634 196L548 190z" fill="url(#cyl)" />
          <ellipse cx="638" cy="158" rx="18" ry="38" fill="#006400" />
          <path d="M534 124L550 146 526 222 508 226z" fill="#009400" /><path d="M550 146L526 222 534 226 556 160z" fill="#004600" />
          <circle cx="442" cy="266" r="21" fill="#404143" /><circle cx="438" cy="268" r="17" fill="#929395" /><circle cx="436" cy="270" r="14" fill="#5a5b5d" /><circle cx="428" cy="274" r="12" fill="#b8b9bb" /><circle cx="426" cy="274" r="7" fill="#dcdcde" />
          <path d="M948 86L976 92 876 338 860 334z" fill="url(#bar)" />
          <path d="M634 138L916 188C940 196 942 232 920 236L634 180z" fill="url(#rod)" />
          <path d="M770 186L802 178 796 186 930 210 928 216 796 194 800 202z" fill="#8a7a3c" />
          <circle cx="930" cy="213" r="11" fill="#a08a44" />
          <path d="M948 62C956 54 978 58 980 66L976 88C966 94 946 90 944 84z" fill="url(#bar)" />
          <ellipse cx="963" cy="64" rx="16" ry="7" fill="#c58a4c" />
          <path d="M846 336C856 330 878 334 880 342L874 362C864 368 844 364 842 358z" fill="url(#bar)" />
          <ellipse cx="862" cy="340" rx="17" ry="7" fill="#ffd08c" />
          <text x="972" y="68" class="lab">L001</text><text x="944" y="214" class="lab dk">J002</text>
        </svg>
        <svg class="triad" viewBox="0 0 48 48" aria-hidden="true">
          <g fill="none" stroke="#a8b0aa"><path d="M14 16l7-5h10v15l-8 4-9-2zM14 16l9 2 8-7M23 18v12M21 11v13l10 2M14 28l7-4" /></g>
          <path d="M11 29l9-7" stroke="#8fbe90" /><path d="M11 30V11" stroke="#1d37c8" stroke-width="2" /><path d="M8 13l3-6 3 6z" fill="#1d37c8" />
          <path d="M11 30l16 3" stroke="#c62a2a" stroke-width="2" /><path d="M25 29l7 5-7 2z" fill="#c62a2a" /><circle cx="11" cy="30" r="3" fill="#aaa" />
          <text x="9" y="7" class="z">Z</text><text x="33" y="38" class="x">X</text>
        </svg>
        <span class="model">MODEL_1 WORK</span>
        <p class="note">运动副选择完成后点击 驱动</p>
        <svg class="mark" viewBox="0 0 190 100" aria-label="百度经验">
          <g class="wm">
            <text x="2" y="68" class="bai">Bai</text>
            <ellipse cx="71" cy="36" rx="7" ry="9" /><ellipse cx="84" cy="23" rx="7" ry="9" /><ellipse cx="100" cy="24" rx="7" ry="9" transform="rotate(12 100 24)" /><ellipse cx="110" cy="40" rx="7" ry="8" />
            <path d="M90 38c8 0 11 7 17 13 9 9 5 19-5 19-5 0-8-1-12-1s-7 1-12 1c-10 0-13-11-5-19 6-6 9-13 17-13z" />
            <text x="119" y="67" class="cn">经验</text>
            <text x="5" y="94" class="url">jingyan.baidu.com</text>
          </g>
          <text x="75" y="65" class="du">du</text>
        </svg>
      </section>

      <section class="dlg" role="dialog" aria-label="运动副">
        <header><span>运动副</span>
          <button class="win" aria-label="重置"><svg viewBox="0 0 12 12"><path d="M6 2c5 0 5 7 0 7H3M5 6L2 9" fill="none" stroke="#fff" stroke-width="2" /></svg></button>
          <button class="win" aria-label="选项"><svg viewBox="0 0 12 12"><circle cx="6" cy="6" r="3" fill="none" stroke="#fff" stroke-width="2" /><path d="M6 1v2M6 9v2M1 6h2M9 6h2M2 2l2 2M8 8l2 2M10 2L8 4M4 8l-2 2" stroke="#fff" /></svg></button>
          <button class="win red" aria-label="关闭"><svg viewBox="0 0 12 12"><path d="M3 3l6 6M9 3l-6 6" stroke="#fff" stroke-width="2" /></svg></button>
        </header>
        <div class="dbody">
          <div class="pagecol">
            <div class="tabs"><button v-for="(t, i) in tabs" :key="t" :class="'tab' + i">{{ t }}</button></div>
            <div class="pg">
              <h3>类型<svg class="ic chev"><use href="#chevup" /></svg></h3>
              <div class="sec">
                <label class="combo kind"><svg class="ic"><use href="#rev" /></svg><select v-model="kind" aria-label="类型"><option>旋转副</option></select><i class="drop"></i></label>
              </div>
              <template v-for="s in 2" :key="s">
                <h3>{{ s === 1 ? '操作' : '基本' }}<svg class="ic chev"><use href="#chevup" /></svg></h3>
                <div class="sec">
                  <label v-if="s === 2" class="snapchk"><input type="checkbox" />啮合连杆</label>
                  <div class="r pick" :class="{ hot: s === 1 }"><svg class="ic"><use href="#tick" /></svg><span>选择连杆 (1)</span><button class="big" aria-label="选择连杆"><svg><use href="#pencil" /></svg></button></div>
                  <div class="r" :class="{ dis: s === 2 }"><svg class="ic"><use href="#tick" /></svg><span>指定原点</span>
                    <button class="sm" aria-label="点构造器"><svg><use href="#ptctor" /></svg></button>
                    <button class="sp" aria-label="圆心"><svg><use href="#center" /></svg><i class="drop"></i></button></div>
                  <div class="r low" :class="{ dis: s === 2 }"><label :for="'o' + s">方位类型</label>
                    <div class="combo ori"><select :id="'o' + s" v-model="orient" :disabled="s === 2"><option>矢量</option></select><i class="drop"></i></div></div>
                  <div class="r" :class="{ dis: s === 2 }"><svg class="ic"><use href="#tick" /></svg><span>指定矢量</span>
                    <button class="sm" aria-label="反向"><svg><use href="#flip" /></svg></button>
                    <button class="sm" aria-label="矢量构造器"><svg><use href="#vecctor" /></svg></button>
                    <button class="sp" aria-label="矢量"><svg><use href="#vector" /></svg><i class="drop"></i></button></div>
                </div>
              </template>
              <h3>极限<svg class="ic chev"><use href="#chevdn" /></svg></h3>
            </div>
          </div>
          <div class="vs"><svg viewBox="0 0 8 8"><path d="M1 6l3-3 3 3" /></svg><i></i><svg viewBox="0 0 8 8"><path d="M1 2l3 3 3-3" /></svg></div>
        </div>
        <footer><button class="ok">确定</button><button>取消</button></footer>
      </section>
      <svg class="arrow" viewBox="0 0 276 20" aria-hidden="true"><path d="M0 10L17 2v5l255 3-255 4v5z" fill="#fb3838" /></svg>
    </main>

    <div class="bar foot">
      <div class="group">
        <i class="grip"></i>
        <template v-for="(it, i) in bottom" :key="i">
          <button v-if="it.k === 'icon'" class="tb" :class="{ off: it.off }" :aria-label="it.n"><svg class="ic"><use :href="'#' + it.n" /></svg></button>
          <i v-else :class="it.k === 'more' ? 'caret more' : it.k"></i>
        </template>
      </div>
    </div>
  </div>
</template>

<style>
body { margin: 0; background: #d4d4d4; }
</style>

<style scoped>
.sprite { position: absolute; width: 0; height: 0; }
.app { display: flex; flex-direction: column; min-height: 100vh; font: 9px/12px "Noto Sans", "Noto Sans CJK SC", sans-serif; color: #222; overflow: hidden; }
.app * { box-sizing: border-box; }
button, select, input { font: inherit; color: inherit; margin: 0; padding: 0; border: 0; background: none; border-radius: 0; }
h2, h3, p, ul { margin: 0; padding: 0; }
.ic { width: 13px; height: 13px; flex: none; display: block; }

.title { display: flex; align-items: center; height: 17px; padding: 0 2px; background: linear-gradient(#333 0, #6c6c70 1px, #4c4c50 5px, #1b1b1b 6px, #1b1b1b 100%); color: #e8e8e8; }
.cap { margin-left: 3px; white-space: pre; }
.brand { margin-left: auto; margin-right: 18px; font: bold 10px/12px "Liberation Sans", sans-serif; color: #fff; }
.wins { display: flex; gap: 3px; }
.win { width: 14px; height: 14px; border: 1px solid #777; border-radius: 2px; background: linear-gradient(#666, #2c2c2c); }
.win svg, .dw svg { display: block; width: 100%; height: 100%; }
.win.red { background: linear-gradient(#f58a70, #d8301a); border-color: #f0a898; }

.menu { display: flex; align-items: center; height: 19px; padding-right: 3px; background: #e5e5e5; border-bottom: 1px solid #cfcfcf; }
.grip { flex: none; width: 3px; height: 14px; margin: 0 1px; background: radial-gradient(circle at 1px 1px, #8c8c8c 1px, transparent 1px) 0 0 / 3px 3px; }
.mi { margin-right: 8px; white-space: nowrap; }
.menu .ic { margin: 0 4px 0 0; }
.mi span { font: 9px/12px "Liberation Sans", sans-serif; }
.doc { margin-left: auto; gap: 2px; }
.dw { width: 12px; height: 12px; border: 1px solid #666; border-radius: 3px; background: #f4f4f4; }
.dw.dim { border-color: #ccc; }

.bar { display: flex; align-items: stretch; flex: none; }
.bar1 { height: 20px; background: linear-gradient(#dedede, #d2d2d2); border-bottom: 1px solid #e8e8e8; }
.bar2 { height: 24px; background: linear-gradient(#dcdcdc, #cbcbcb); border-bottom: 2px solid #a2a2a2; }
.group { display: flex; align-items: center; border-right: 1px solid #eee; box-shadow: 1px 0 0 #b8b8b8; padding-right: 1px; }
.tb { width: 17px; height: 17px; display: grid; place-items: center; flex: none; }
.off { opacity: .5; }
.tx { white-space: nowrap; }
.caret { flex: none; width: 9px; height: 4px; background: #111; clip-path: polygon(22% 0, 78% 0, 50% 80%); }
.more { align-self: flex-end; margin-bottom: 3px; }
.sep { flex: none; width: 2px; height: 18px; margin: 0 1px; border-left: 1px solid #b4b4b4; border-right: 1px solid #f0f0f0; }
.combo { display: grid; align-items: stretch; height: 14px; background: #fff; border: 1px solid #777; border-radius: 2px; }
.combo select { grid-area: 1 / 1; appearance: none; width: 100%; padding: 0 12px 0 2px; outline: 0; line-height: 12px; }
.drop { grid-area: 1 / 1; justify-self: end; width: 12px; background: linear-gradient(#eef6ff, #5e9ade 35%, #8cc6f8); border-left: 1px solid #5a7fb0; display: grid; place-items: center; pointer-events: none; }
.drop::after { content: ""; width: 8px; height: 4px; background: #111; clip-path: polygon(0 0, 100% 0, 50% 100%); }
.num { width: 34px; margin: 0 4px; }
.bar3 { height: 22px; align-items: center; padding-left: 4px; background: linear-gradient(#c2c2c2, #dadada); border-bottom: 1px solid #eee; }
.wide1 { width: 104px; }
.wide2 { width: 111px; margin: 0 4px 0 6px; }
.far { margin-left: auto; margin-right: 2px; }

.prompt { display: flex; align-items: stretch; height: 16px; padding-left: 2px; background: #dadada; border-bottom: 1px solid #bbb; }
.prompt b { width: 47%; line-height: 15px; white-space: nowrap; }
.psep { width: 2px; background: #f3f3f3; border-left: 1px solid #c8c8c8; margin-right: 13px; }
.psep.first { margin-right: auto; }
.psep.last { margin-right: 24px; }
.prompt .tb { height: 15px; }

.main { position: relative; flex: 1; display: flex; min-height: 395px; }
.res { width: 20px; padding: 12px 0 0 4px; background: #ababab; display: flex; flex-direction: column; flex: none; }
.rt { height: 23px; margin-bottom: 2px; border: 1px solid #777; border-right: 0; border-radius: 3px 0 0 3px; background: linear-gradient(90deg, #e2e2e2, #c9c9c9); display: grid; place-items: center; }
.rt.on { background: #ececec; }
.rt.gap { margin-top: 9px; }
.side { width: 136px; flex: none; background: #ececec; border-right: 1px solid #999; padding: 0 8px 4px 6px; display: flex; flex-direction: column; box-shadow: inset 1px 0 #fff; }
.side h2 { display: flex; align-items: center; height: 26px; padding-left: 2px; font-size: 10px; line-height: 14px; gap: 8px; }
.pin { width: 10px; }
.treebox { flex: 1; border: 1px solid #8c8c8c; background: #fff; display: flex; flex-direction: column; }
.thead { height: 14px; padding-left: 4px; line-height: 13px; background: linear-gradient(#fafafa, #cfcfcf); border-bottom: 1px solid #999; flex: none; }
.tree { list-style: none; flex: 1; display: grid; grid-template-rows: repeat(20, 1fr); }
.tree li { display: flex; align-items: center; color: #555; height: 100%; line-height: 13px; overflow: hidden; }
.tree li:nth-child(even) { background: #f5f5f5; }
.l2 { padding-left: 14px; }
.l3 { padding-left: 28px; }
.tree span { padding: 0 1px; }
.tree .sel { flex: 1; background: #0a74d8; color: #fff; }
.tree .blue { color: #6a6af0; }
.slot { width: 14px; height: 100%; flex: none; display: grid; place-items: center; }
.line { background: linear-gradient(90deg, #ccc, #ccc) 7px 50% / 7px 1px no-repeat, linear-gradient(#ccc, #ccc) 7px 0 / 1px 100% no-repeat; }
.exp { width: 7px; height: 7px; border: 1px solid #999; background: linear-gradient(#555, #555) 1px 2px / 3px 1px no-repeat #fff; }
input[type="checkbox"] { appearance: none; flex: none; width: 10px; height: 10px; margin: 0 1px; border: 1px solid #444; background: #fff; display: grid; }
.tree input:checked::after { content: ""; width: 8px; height: 8px; background: #e01818; clip-path: polygon(0 45%, 25% 40%, 40% 65%, 85% 0, 100% 10%, 45% 100%, 30% 100%); }
.hs { display: flex; align-items: center; height: 14px; padding: 0 3px; flex: none; }
.hs svg, .vs svg { width: 8px; height: 8px; fill: none; stroke: #444; stroke-width: 1; }
.hs i { width: 18px; height: 11px; background: #ccc; margin: 0 auto 0 2px; }
.split { height: 10px; display: grid; place-items: center; background: linear-gradient(#bbb, #bbb) 0 50% / 100% 1px no-repeat; flex: none; }
.split i { width: 20px; height: 4px; background: #ddd; border: 1px solid #aaa; }
.acc { display: flex; align-items: center; justify-content: space-between; height: 17px; flex: none; padding: 0 0 0 4px; font-weight: bold; background: linear-gradient(#fdfdfd, #cdcdcd); border-bottom: 1px solid #aaa; }
.chev { width: 17px; height: 15px; padding: 2px; border-left: 1px solid #b8b8b8; }

.view { position: relative; flex: 1; background: #d2d3d8; border: 1px solid #eda765; overflow: hidden; }
.vise { position: absolute; left: 413px; top: 91px; width: 360px; height: 140px; }
.lab { font-size: 26px; fill: #eda25a; }
.dk { fill: #c0a060; }
.triad { position: absolute; left: 23px; bottom: 11px; width: 48px; height: 48px; overflow: visible; }
.z { font-size: 9px; fill: #4a62e0; }
.x { font-size: 9px; fill: #d04040; }
.model { position: absolute; left: 3px; bottom: 0; color: #f0a25c; }
.arrow { position: absolute; left: 363px; top: 18px; width: 276px; height: 20px; pointer-events: none; }
.note { position: absolute; left: 481px; top: 16px; font-size: 21px; line-height: 28px; font-weight: 300; color: #f04444; white-space: nowrap; }
.mark { position: absolute; right: 45px; bottom: 0; width: 190px; height: 100px; }
.wm { fill: #f1f1f2; stroke: #c0c1c5; stroke-width: 1px; paint-order: stroke; }
.bai { font: bold 39px "Liberation Sans", sans-serif; }
.du { font: bold 23px "Liberation Sans", sans-serif; fill: #b9babf; }
.cn { font: 900 30px "Noto Sans CJK SC", sans-serif; }
.url { font-size: 20px; }

.dlg { position: absolute; left: 246px; top: -8px; width: 244px; background: #ebebeb; border-radius: 4px; border: 1px solid #777; border-top: 0; border-bottom: 6px solid #1c1c1c; display: flex; flex-direction: column; overflow: hidden; }
.dlg header { display: flex; align-items: center; gap: 1px; height: 17px; padding: 0 1px 0 5px; color: #eee; background: linear-gradient(#777, #444 5px, #181818 6px, #181818); }
.dlg header span { margin-right: auto; }
.dbody { display: flex; height: 348px; padding: 7px 4px 0 7px; border-bottom: 1px solid #fff; box-shadow: 0 1px #bbb; }
.pagecol { flex: 1; display: flex; flex-direction: column; min-width: 0; }
.tabs { display: flex; height: 16px; gap: 1px; align-items: flex-end; }
.tabs button { width: 34px; height: 15px; border: 1px solid #999; border-bottom: 0; border-radius: 2px 2px 0 0; background: linear-gradient(#eee, #bbb); line-height: 13px; }
.tabs .tab0 { width: 36px; height: 16px; background: #eee; outline: 1px dotted #777; outline-offset: -3px; }
.tabs .tab2 { background: linear-gradient(#8fc3ee, #4cb4f0 50%, #7fe6fc); border-color: #3f78b8; }
.pg { flex: 1; overflow: hidden; border: solid #9a9a9a; border-width: 1px 1px 0; padding: 3px 4px 0 2px; background: #e9e9e9; box-shadow: inset -2px 0 #e9e9e9, inset -3px 0 #aaa; }
.pg h3 { display: flex; align-items: center; justify-content: space-between; height: 16px; padding: 0 0 0 4px; font-size: 9px; background: linear-gradient(#fdfdfd, #cfcfcf); border-bottom: 1px solid #999; }
.sec { background: #cfcfcf; border: 1px solid #b4b4b4; border-top: 0; border-bottom: 0; padding: 5px 6px 8px 5px; display: flex; flex-direction: column; gap: 3px; }
.r { display: flex; align-items: center; gap: 3px; height: 21px; }
.r > .ic { width: 10px; height: 10px; margin-left: 1px; }
.r > span, .r > label { margin-right: auto; }
.pick { height: 22px; border-radius: 3px; }
.hot { background: linear-gradient(90deg, #e2a366 0, #e0aa76 50%, #cfcfcf 90%); }
.low { height: 16px; }
.big, .sm, .sp { border: 1px solid #777; border-radius: 2px; background: linear-gradient(#f8f8f8, #ccc); display: grid; place-items: center; flex: none; }
.big { width: 22px; height: 22px; }
.big svg { width: 16px; height: 16px; }
.hot .big { background: linear-gradient(#fbd0a4, #f47e36); border-color: #a86030; }
.sm { width: 16px; height: 16px; }
.sm svg { width: 14px; height: 14px; }
.sp { width: 35px; height: 21px; grid-template-columns: 1fr 12px; }
.sp svg { width: 18px; height: 18px; }
.sp .drop { grid-area: 1 / 2; align-self: stretch; width: 12px; }
.dis { color: #888; }
.dis .ic { opacity: .5; filter: grayscale(.6); }
.dis .sm, .dis .sp, .dis .combo { border-color: #aaa; }
.dis .sm, .dis .sp { background: #dcdcdc; }
.dis .sm svg, .dis .sp svg { opacity: .5; }
.dis .combo { background: #cfcfcf; }
.dis select { opacity: 1; color: #777; }
.dis .drop { background: #e2e2e2; border-color: #bbb; }
.dis .drop::after { background: #999; }
.snapchk { display: flex; align-items: center; height: 14px; }
.snapchk input { width: 12px; height: 12px; margin: 0 1px 0 0; background: #e2e2e2; border-color: #888; border-radius: 2px; }
.kind { height: 16px; margin: 1px 0; grid-template-columns: 17px 1fr; align-items: center; }
.kind .ic { margin-left: 3px; width: 12px; }
.kind select, .kind .drop { grid-area: 1 / 2; height: 100%; }
.ori { width: 95px; height: 16px; }
.vs { width: 12px; margin-left: 5px; display: flex; flex-direction: column; align-items: center; padding: 0 0 2px; }
.vs i { width: 10px; height: 244px; margin: 7px 0 auto; background: #a5a5a5; }
.dlg footer { display: flex; justify-content: flex-end; gap: 5px; padding: 5px 12px 4px; }
.dlg footer button { width: 47px; height: 16px; border: 1px solid #777; border-radius: 2px; background: linear-gradient(#fafafa, #cdcdcd 50%, #e8e8e8); }
.dlg footer .ok { background: linear-gradient(#b8e8a0, #5fc04c 50%, #b4f890); border-color: #3c8430; }
.foot { height: 20px; background: linear-gradient(#e0e0e0, #cbcbcb); border-top: 1px solid #bbb; }
</style>
